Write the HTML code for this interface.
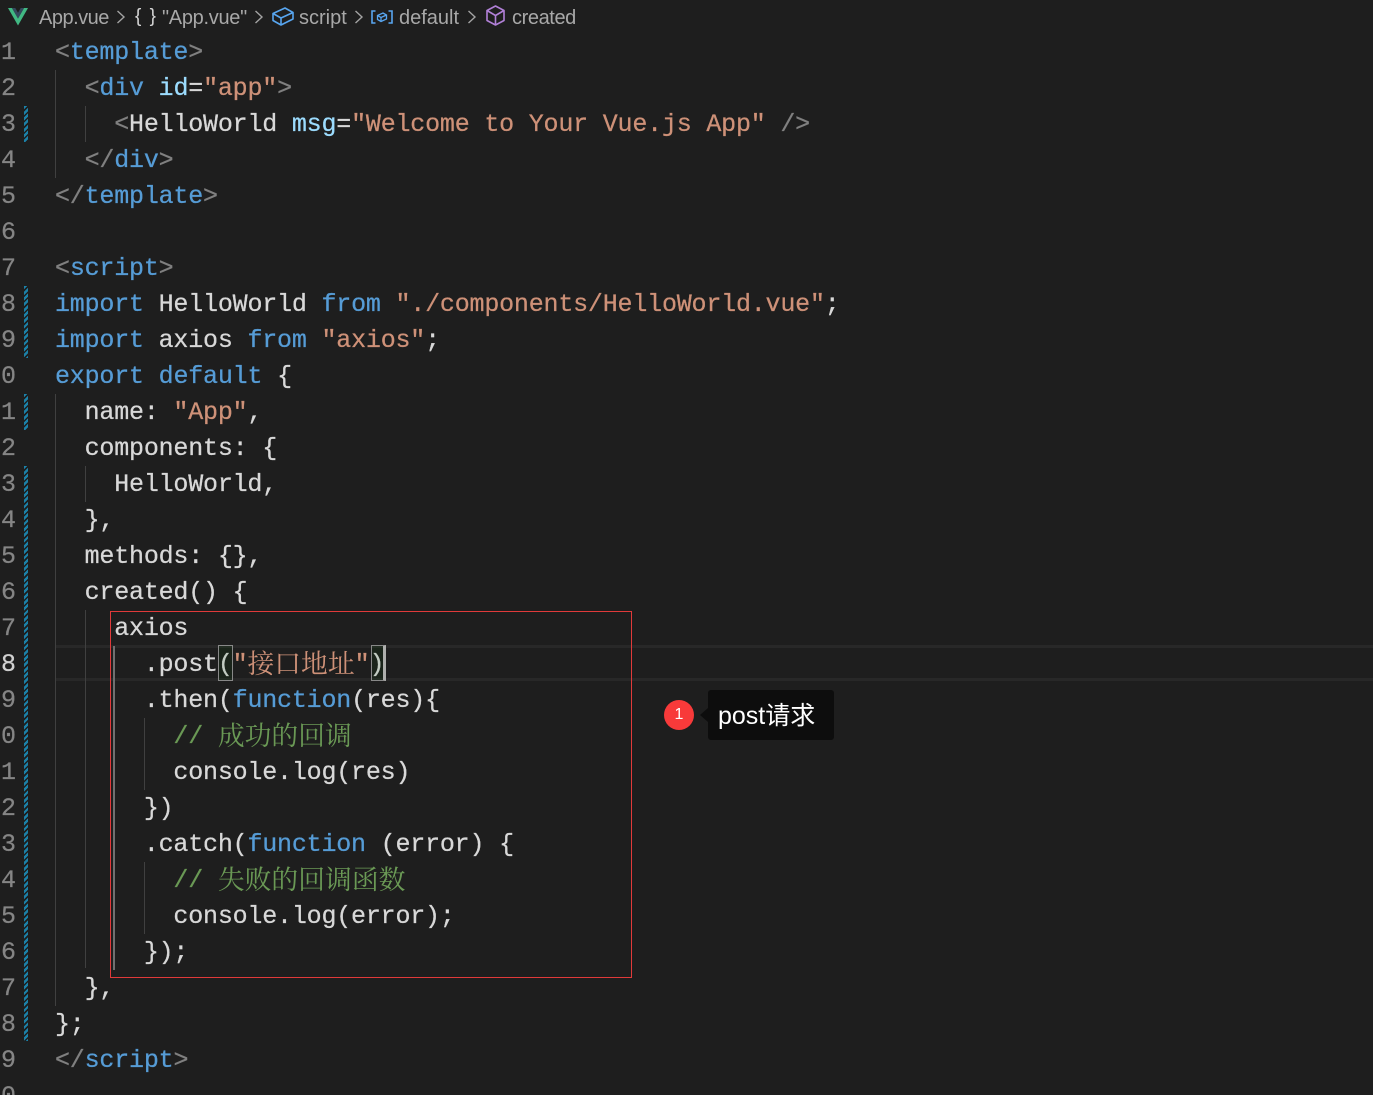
<!DOCTYPE html>
<html lang="zh">
<head>
<meta charset="utf-8">
<style>
html,body{margin:0;padding:0;background:#1e1e1e;width:1373px;height:1095px;overflow:hidden}
#r{position:relative;width:1373px;height:1095px;overflow:hidden;background:#1e1e1e}
.l{position:absolute;left:55px;height:36px;line-height:36px;white-space:pre;font-family:"Liberation Mono",monospace;font-size:25px;letter-spacing:-.2px;color:#d8d8d8;margin-top:2px;-webkit-text-stroke:.25px currentColor}
.n{position:absolute;left:1px;height:36px;line-height:36px;font-family:"Liberation Mono",monospace;font-size:25px;color:#858585;margin-top:2px;-webkit-text-stroke:.25px currentColor}
.g{color:#808080}.b{color:#569cd6}.a{color:#9cdcfe}.s{color:#ce9178}.c{color:#6a9955}
.z{font-family:"Noto Serif CJK SC",serif;font-size:26.8px;letter-spacing:0;font-weight:400;line-height:0;-webkit-text-stroke:0;position:relative;top:1.5px}
.i{position:absolute;width:1px;background:#404040}
.d{position:absolute;left:24px;width:4px;background:repeating-linear-gradient(135deg,#1b81a8 0 2.4px,#1e1e1e 2.4px 4px)}
.t{position:absolute;top:4px;height:28px;line-height:28px;font-family:"Liberation Sans",sans-serif;font-size:20px;color:#a8a8a8;white-space:pre;letter-spacing:-.2px}
svg{position:absolute;overflow:visible}
</style>
</head>
<body>
<div id="r">
<div style="position:absolute;left:55px;top:645px;width:1318px;height:36px;border-top:3px solid #282828;border-bottom:3px solid #282828;box-sizing:border-box"></div>

<div class="i" style="left:55px;top:70px;height:108px"></div>
<div class="i" style="left:85px;top:106px;height:36px"></div>
<div class="i" style="left:55px;top:394px;height:612px"></div>
<div class="i" style="left:85px;top:466px;height:36px"></div>
<div class="i" style="left:85px;top:610px;height:358px"></div>
<div class="i" style="left:113px;top:646px;height:324px;width:2px;background:#707070"></div>
<div class="i" style="left:144px;top:718px;height:72px"></div>
<div class="i" style="left:144px;top:862px;height:72px"></div>

<div class="d" style="top:106px;height:36px"></div>
<div class="d" style="top:286px;height:72px"></div>
<div class="d" style="top:394px;height:36px"></div>
<div class="d" style="top:466px;height:575px"></div>

<div class="n" style="top:33px">1</div>
<div class="n" style="top:69px">2</div>
<div class="n" style="top:105px">3</div>
<div class="n" style="top:141px">4</div>
<div class="n" style="top:177px">5</div>
<div class="n" style="top:213px">6</div>
<div class="n" style="top:249px">7</div>
<div class="n" style="top:285px">8</div>
<div class="n" style="top:321px">9</div>
<div class="n" style="top:357px">0</div>
<div class="n" style="top:393px">1</div>
<div class="n" style="top:429px">2</div>
<div class="n" style="top:465px">3</div>
<div class="n" style="top:501px">4</div>
<div class="n" style="top:537px">5</div>
<div class="n" style="top:573px">6</div>
<div class="n" style="top:609px">7</div>
<div class="n" style="top:645px;color:#d0d0d0">8</div>
<div class="n" style="top:681px">9</div>
<div class="n" style="top:717px">0</div>
<div class="n" style="top:753px">1</div>
<div class="n" style="top:789px">2</div>
<div class="n" style="top:825px">3</div>
<div class="n" style="top:861px">4</div>
<div class="n" style="top:897px">5</div>
<div class="n" style="top:933px">6</div>
<div class="n" style="top:969px">7</div>
<div class="n" style="top:1005px">8</div>
<div class="n" style="top:1041px">9</div>
<div class="n" style="top:1077px">0</div>

<div class="l" style="top:33px"><span class="g">&lt;</span><span class="b">template</span><span class="g">&gt;</span></div>
<div class="l" style="top:69px">  <span class="g">&lt;</span><span class="b">div</span> <span class="a">id</span>=<span class="s">"app"</span><span class="g">&gt;</span></div>
<div class="l" style="top:105px">    <span class="g">&lt;</span>HelloWorld <span class="a">msg</span>=<span class="s">"Welcome to Your Vue.js App"</span> <span class="g">/&gt;</span></div>
<div class="l" style="top:141px">  <span class="g">&lt;/</span><span class="b">div</span><span class="g">&gt;</span></div>
<div class="l" style="top:177px"><span class="g">&lt;/</span><span class="b">template</span><span class="g">&gt;</span></div>
<div class="l" style="top:249px"><span class="g">&lt;</span><span class="b">script</span><span class="g">&gt;</span></div>
<div class="l" style="top:285px"><span class="b">import</span> HelloWorld <span class="b">from</span> <span class="s">"./components/HelloWorld.vue"</span>;</div>
<div class="l" style="top:321px"><span class="b">import</span> axios <span class="b">from</span> <span class="s">"axios"</span>;</div>
<div class="l" style="top:357px"><span class="b">export</span> <span class="b">default</span> {</div>
<div class="l" style="top:393px">  name: <span class="s">"App"</span>,</div>
<div class="l" style="top:429px">  components: {</div>
<div class="l" style="top:465px">    HelloWorld,</div>
<div class="l" style="top:501px">  },</div>
<div class="l" style="top:537px">  methods: {},</div>
<div class="l" style="top:573px">  created() {</div>
<div class="l" style="top:609px">    axios</div>
<div class="l" style="top:645px">      .post(<span class="s">"<span class="z">接口地址</span>"</span>)</div>
<div class="l" style="top:681px">      .then(<span class="b">function</span>(res){</div>
<div class="l" style="top:717px">        <span class="c">// <span class="z">成功的回调</span></span></div>
<div class="l" style="top:753px">        console.log(res)</div>
<div class="l" style="top:789px">      })</div>
<div class="l" style="top:825px">      .catch(<span class="b">function</span> (error) {</div>
<div class="l" style="top:861px">        <span class="c">// <span class="z">失败的回调函数</span></span></div>
<div class="l" style="top:897px">        console.log(error);</div>
<div class="l" style="top:933px">      });</div>
<div class="l" style="top:969px">  },</div>
<div class="l" style="top:1005px">};</div>
<div class="l" style="top:1041px"><span class="g">&lt;/</span><span class="b">script</span><span class="g">&gt;</span></div>

<div style="position:absolute;left:218px;top:645px;width:15px;height:36px;box-sizing:border-box;border:1px solid #888;background:rgba(0,100,0,.1)"></div>
<div style="position:absolute;left:371px;top:645px;width:15px;height:36px;box-sizing:border-box;border:1px solid #888;border-right:3px solid #aeafad;background:rgba(0,100,0,.1)"></div>

<div style="position:absolute;left:110px;top:611px;width:522px;height:367px;box-sizing:border-box;border:1px solid #e03a3a"></div>

<svg style="left:8px;top:8px" width="20" height="18" viewBox="0 0 20 18"><path d="M0 0H4L10 10.5 16 0H20L10 17.5Z" fill="#41b883"/><path d="M4 0H7.3L10 4.7 12.7 0H16L10 10.5Z" fill="#35495e"/></svg>
<div class="t" style="left:39px;letter-spacing:-.5px">App.vue</div>
<svg style="left:116px;top:10px" width="10" height="14" viewBox="0 0 10 14" fill="none" stroke="#a3a3a3" stroke-width="1.4"><path d="M1.5 1L8 7 1.5 13"/></svg>
<div class="t" style="left:135px;color:#d4d4d4;letter-spacing:1.5px;font-size:19px;top:3px">{ }</div>
<div class="t" style="left:162px;letter-spacing:-.3px">"App.vue"</div>
<svg style="left:254px;top:10px" width="10" height="14" viewBox="0 0 10 14" fill="none" stroke="#a3a3a3" stroke-width="1.4"><path d="M1.5 1L8 7 1.5 13"/></svg>
<svg style="left:272px;top:7px" width="22" height="19" viewBox="0 0 22 19" fill="none" stroke="#58a6f0" stroke-width="1.6" stroke-linejoin="round"><path d="M1 6.5L13 1 21 5.5V12L9 18 1 13.5Z"/><path d="M1 6.5L9 11 21 5.5M9 11V18"/></svg>
<div class="t" style="left:299px;letter-spacing:0">script</div>
<svg style="left:354px;top:10px" width="10" height="14" viewBox="0 0 10 14" fill="none" stroke="#a3a3a3" stroke-width="1.4"><path d="M1.5 1L8 7 1.5 13"/></svg>
<svg style="left:371px;top:10px" width="22" height="14" viewBox="0 0 22 14" fill="none" stroke="#58a6f0" stroke-width="1.6"><path d="M4.5 1H1V13H4.5M17.500 1H21V13H17.500"/><path d="M6.500 5.500L12 3 15.500 5V9L10 11.500 6.500 9.500ZM6.500 5.500L10 7.500 15.500 5M10 7.500V11.500" stroke-width="1.300"/></svg>
<div class="t" style="left:399px;letter-spacing:0">default</div>
<svg style="left:467px;top:10px" width="10" height="14" viewBox="0 0 10 14" fill="none" stroke="#a3a3a3" stroke-width="1.4"><path d="M1.5 1L8 7 1.5 13"/></svg>
<svg style="left:486px;top:5px" width="19" height="21" viewBox="0 0 19 21" fill="none" stroke="#b180d7" stroke-width="1.6" stroke-linejoin="round"><path d="M9.500 1L18 5.500V15.500L9.500 20 1 15.500V5.500Z"/><path d="M1 5.500L9.500 10.500 18 5.500M9.500 10.500V20"/></svg>
<div class="t" style="left:512px;letter-spacing:-.4px">created</div>

<div style="position:absolute;left:664px;top:700px;width:30px;height:30px;border-radius:50%;background:#f83a3a;color:#fff;font:16px/29px 'Liberation Sans',sans-serif;text-align:center">1</div>
<div style="position:absolute;left:700px;top:708px;width:0;height:0;border:7px solid transparent;border-right:8px solid #0d0d0d;border-left:0"></div>
<div style="position:absolute;left:708px;top:690px;width:126px;height:50px;border-radius:3px;background:#0d0d0d;color:#fff;font:25px/52px 'Liberation Sans','Noto Sans CJK SC',sans-serif;padding-left:10px;box-sizing:border-box;white-space:pre">post请求</div>
</div>
</body>
</html>
